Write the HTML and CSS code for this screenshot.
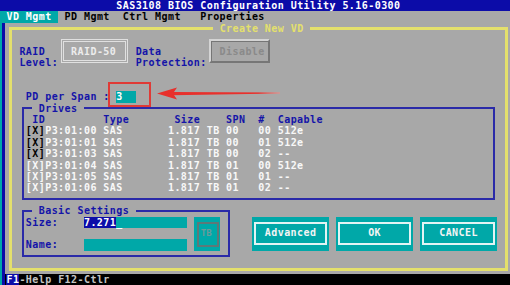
FILE: index.html
```html
<!DOCTYPE html>
<html lang="en">
<head>
  <meta charset="UTF-8" />
  <title>SAS3108 BIOS Configuration Utility</title>
  <link rel="stylesheet" href="styles.css">
</head>
<body>

<div class="screen">
  <div class="titlebar">SAS3108 BIOS Configuration Utility 5.16-0300</div>

  <nav class="menubar">
    <span class="menu active">VD Mgmt</span>
    <span class="menu">PD Mgmt</span>
    <span class="menu">Ctrl Mgmt</span>
    <span class="menu">Properties</span>
  </nav>

  <div class="desk">
    <fieldset class="win">
      <legend> Create New VD </legend>

      <div class="raid">
        <div class="lbl lbl-raid">RAID<br>Level:</div>
        <div class="box box-raid">RAID-50</div>
        <div class="lbl lbl-data">Data<br>Protection:</div>
        <div class="box box-off">Disable</div>
      </div>

      <div class="pd">
        <span class="lbl lbl-pd">PD per Span :</span>
        <span class="field field-pd">3</span>
      </div>

      <fieldset class="group drives">
        <legend> Drives </legend>
        <div class="drive-grid">
          <span class="th span2 ind">ID</span><span class="th">Type</span><span class="th ind">Size</span><span class="th">SPN</span><span class="th">#</span><span class="th">Capable</span>

          <span class="chk on">[X]</span><span>P3:01:00</span><span>SAS</span><span>1.817 TB</span><span>00</span><span>00</span><span>512e</span>
          <span class="chk on">[X]</span><span>P3:01:01</span><span>SAS</span><span>1.817 TB</span><span>00</span><span>01</span><span>512e</span>
          <span class="chk on">[X]</span><span>P3:01:03</span><span>SAS</span><span>1.817 TB</span><span>00</span><span>02</span><span>--</span>
          <span class="chk">[X]</span><span>P3:01:04</span><span>SAS</span><span>1.817 TB</span><span>01</span><span>00</span><span>512e</span>
          <span class="chk">[X]</span><span>P3:01:05</span><span>SAS</span><span>1.817 TB</span><span>01</span><span>01</span><span>--</span>
          <span class="chk">[X]</span><span>P3:01:06</span><span>SAS</span><span>1.817 TB</span><span>01</span><span>02</span><span>--</span>
        </div>
      </fieldset>

      <div class="bottom">
        <fieldset class="group basic">
          <legend> Basic Settings </legend>
          <div class="basic-body">
            <div class="fields">
              <div class="frow">
                <span class="lbl flbl">Size:</span>
                <span class="field field-wide"><span class="sel">7.271</span><span class="cursor">_</span></span>
              </div>
              <div class="frow"></div>
              <div class="frow">
                <span class="lbl flbl">Name:</span>
                <span class="field field-wide"></span>
              </div>
            </div>
            <div class="tb"><span class="tb-inner">TB</span></div>
          </div>
        </fieldset>

        <div class="actions">
          <div class="act"><span class="act-inner">Advanced</span></div>
          <div class="act"><span class="act-inner">OK</span></div>
          <div class="act"><span class="act-inner">CANCEL</span></div>
        </div>
      </div>
    </fieldset>
  </div>

  <div class="status"><span class="key">F1</span>-Help F12-Ctlr</div>

  <!-- annotation drawn over the screenshot -->
  <div class="mark"></div>
  <svg class="arrow" width="140" height="20" viewBox="150 84 140 20">
    <defs>
      <linearGradient id="fade" x1="0" x2="1" y1="0" y2="0">
        <stop offset="0" stop-color="#e8302c"/>
        <stop offset="0.8" stop-color="#e8302c"/>
        <stop offset="1" stop-color="#f08c88"/>
      </linearGradient>
    </defs>
    <polygon points="172,92 280,92.6 280,93.6 172,95.2" fill="url(#fade)"/>
    <polygon points="157,93.5 177,87.5 173,93.5 177,99.5" fill="#e8302c"/>
  </svg>
</div>

</body>
</html>
```

FILE: styles.css
```css
:root {
  --c: 6.46px;   /* one text-mode column */
  --r: 11.4px;   /* one text-mode row */
  --gray: #a8a8a8;
  --blue: #1414a8;
  --teal: #00a8a8;
  --yellow: #e4e06c;
}

body {
  margin: 0;
  background: var(--gray);
  font-family: "DejaVu Sans Mono", monospace;
  font-size: 10px;
  letter-spacing: 0.44px;
  font-weight: bold;
  line-height: var(--r);
  overflow: hidden;
}

.screen {
  position: relative;
  width: 510px;
  height: 285px;
  background: var(--gray);
}

/* top bars */
.titlebar {
  height: var(--r);
  background: #0c0ca8;
  color: #fff;
  padding-left: calc(18 * var(--c));
}

.menubar {
  display: grid;
  grid-template-columns: calc(9 * var(--c)) calc(9 * var(--c)) calc(12 * var(--c)) auto;
  height: var(--r);
  color: #000;
}

.menu {
  padding-left: var(--c);
}

.menu.active {
  background: var(--teal);
  color: #fff;
}

/* desktop + window */
.desk {
  height: calc(22 * var(--r));
  background: linear-gradient(90deg, var(--teal) 0 2px, #0c0ca8 2px 5px, var(--gray) 5px);
}

fieldset {
  margin: 0;
  padding: 0;
  min-width: 0;
  box-sizing: border-box;
}

legend {
  padding: 0;
  line-height: var(--r);
  white-space: pre;
}

.win {
  margin-left: 9px;
  width: 499px;
  height: 248.2px;
  border: 3px solid var(--yellow);
}

.win > legend {
  margin-left: calc(33 * var(--c) - 12px);
  color: var(--yellow);
}

.lbl {
  color: var(--blue);
  white-space: nowrap;
}

/* raid level / data protection */
.raid {
  display: flex;
  align-items: flex-start;
  height: calc(3 * var(--r));
}

.lbl-raid {
  margin-top: var(--r);
  margin-left: calc(3 * var(--c) - 12px);
  width: 42px;
}

.box {
  box-sizing: border-box;
  height: 24px;
  margin-top: 4.8px;
  padding-top: 3.6px;
}

.box-raid {
  width: 66.6px;
  border: 3px double #e0e0e0;
  padding-left: 6.7px;
  color: #ececec;
}

.lbl-data {
  margin-top: var(--r);
  margin-left: 7.7px;
  width: 73.3px;
}

.box-off {
  width: 61px;
  border: 2px solid;
  border-color: #d4d4d4 #767676 #767676 #d4d4d4;
  box-shadow: inset 1px 1px 0 #767676;
  padding-left: 8.6px;
  padding-top: 4.6px;
  color: #8a8a8a;
}

/* PD per span */
.pd {
  display: flex;
  margin-top: calc(2 * var(--r));
  padding-left: calc(4 * var(--c) - 12px);
  height: var(--r);
}

.lbl-pd {
  width: calc(14 * var(--c));
}

.field {
  display: block;
  background: var(--teal);
  color: #fff;
  height: var(--r);
}

.field-pd {
  width: calc(3 * var(--c));
}

/* blue framed groups */
.group {
  border: 2px solid #2a2aa8;
  margin-left: 9.6px;
}

.group > legend {
  margin-left: 8.7px;
  color: var(--blue);
}

.drives {
  width: 473.6px;
  height: 97.9px;
}

.drive-grid {
  display: grid;
  grid-template-columns:
    calc(3 * var(--c)) calc(9 * var(--c)) calc(10 * var(--c))
    calc(9 * var(--c)) calc(5 * var(--c)) calc(3 * var(--c)) auto;
  grid-auto-rows: var(--r);
  margin-left: 2.24px;
  color: #f8f8f8;
  white-space: pre;
}

.th {
  color: var(--blue);
}

.span2 {
  grid-column: span 2;
}

.ind {
  padding-left: var(--c);
}

.chk.on {
  color: #000;
}

/* basic settings + buttons */
.bottom {
  display: flex;
  align-items: flex-start;
  margin-top: 4.7px;
}

.basic {
  width: 208.7px;
  height: 52.3px;
}

.basic-body {
  display: flex;
  margin-left: 2.24px;
}

.frow {
  display: flex;
  height: var(--r);
}

.flbl {
  width: calc(9 * var(--c));
}

.field-wide {
  display: flex;
  width: calc(16 * var(--c));
}

.sel {
  background: #0c0ca8;
}

.tb {
  box-sizing: border-box;
  width: calc(4 * var(--c));
  height: calc(3 * var(--r));
  margin-left: var(--c);
  background: var(--teal);
  padding: 5px 1px 4px 3px;
}

.tb-inner {
  display: block;
  box-sizing: border-box;
  height: 100%;
  border: 2px solid #5e7878;
  padding: 4px 0 0 2px;
  color: #6c9a9a;
  font-size: 9px;
  letter-spacing: 0;
}

.actions {
  display: flex;
  gap: var(--c);
  margin-top: var(--r);
  margin-left: 21.6px;
}

.act {
  box-sizing: border-box;
  width: calc(12 * var(--c));
  height: calc(3 * var(--r));
  background: var(--teal);
  padding: 5px 2px 6px;
}

.act-inner {
  display: flex;
  align-items: center;
  justify-content: center;
  height: 100%;
  box-sizing: border-box;
  border: 2px solid #e2f4f4;
  color: #f4f4f4;
}

/* status line */
.status {
  height: var(--r);
  background: linear-gradient(90deg, var(--teal) 0 2px, #0c0ca8 2px 5px, #000 5px);
  color: #c4c4c4;
  padding-left: var(--c);
  white-space: pre;
}

.key {
  background: #0c0ca8;
  color: #fff;
}

/* red callout */
.mark {
  position: absolute;
  left: 108px;
  top: 82px;
  width: 43px;
  height: 25px;
  box-sizing: border-box;
  border: 2px solid #e03a36;
}

.arrow {
  position: absolute;
  left: 150px;
  top: 84px;
}
```
